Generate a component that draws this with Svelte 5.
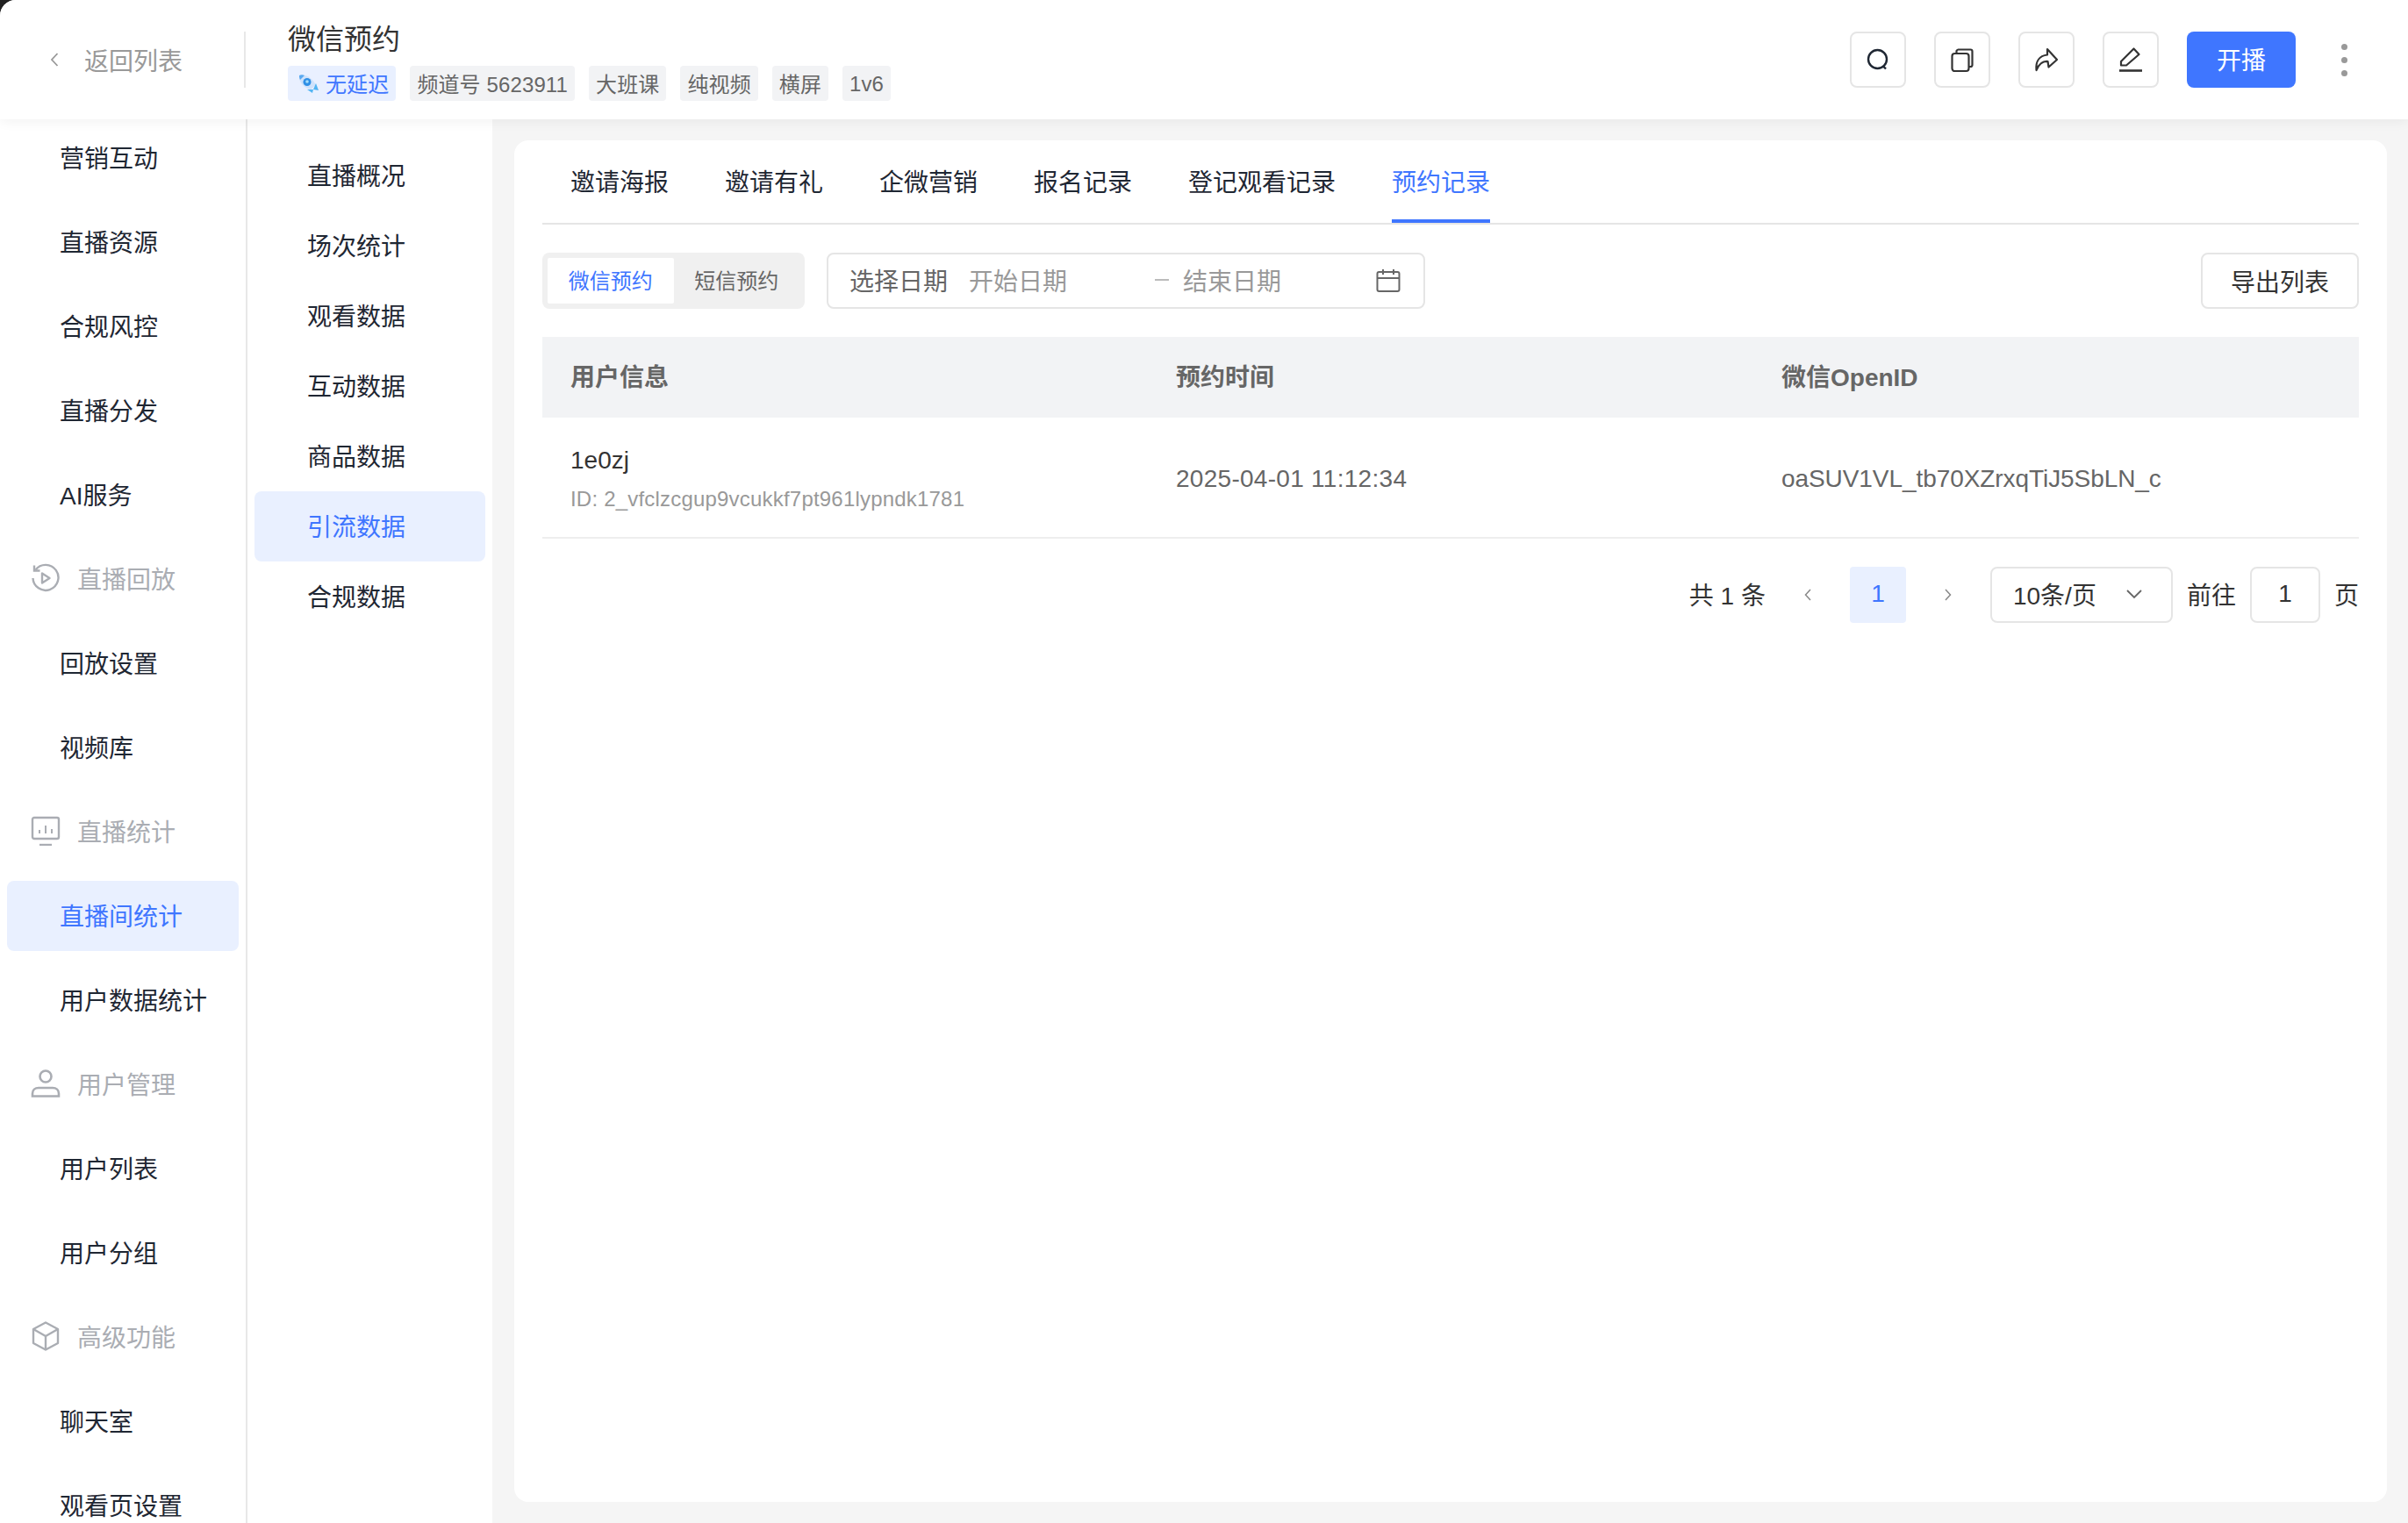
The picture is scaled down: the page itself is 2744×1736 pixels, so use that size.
<script lang="ts">
	const nav = [
		{ label: '营销互动' },
		{ label: '直播资源' },
		{ label: '合规风控' },
		{ label: '直播分发' },
		{ label: 'AI服务' },
		{ label: '直播回放', icon: 'replay' },
		{ label: '回放设置' },
		{ label: '视频库' },
		{ label: '直播统计', icon: 'stats' },
		{ label: '直播间统计', active: true },
		{ label: '用户数据统计' },
		{ label: '用户管理', icon: 'user' },
		{ label: '用户列表' },
		{ label: '用户分组' },
		{ label: '高级功能', icon: 'box' },
		{ label: '聊天室' },
		{ label: '观看页设置' }
	];

	const subnav = ['直播概况', '场次统计', '观看数据', '互动数据', '商品数据', '引流数据', '合规数据'];
	const tags = ['频道号 5623911', '大班课', '纯视频', '横屏', '1v6'];
	const tabs = ['邀请海报', '邀请有礼', '企微营销', '报名记录', '登记观看记录', '预约记录'];
</script>

<div class="page">
	<header class="topbar">
		<div class="back">
			<svg class="back-icon" width="12" height="20" viewBox="0 0 12 20" fill="none">
				<path d="M9.5 3 3 10l6.5 7" stroke="#999" stroke-width="1.8" />
			</svg>
			<span>返回列表</span>
		</div>
		<div class="title-block">
			<div class="title">微信预约</div>
			<div class="tags">
				<span class="tag tag-blue">
					<svg width="30" height="24" viewBox="0 0 30 24" fill="none">
						<path d="M5 3C12 1 20 6 24 14l-6 5C10 17 4 10 5 3Z" fill="#cfe2fb" />
						<path d="M5 3c2-1 4-1 6 0L6 8C5 6 5 4 5 3Z" fill="#5aa9f0" />
						<circle cx="14" cy="10.500" r="4.500" fill="#2f8fe6" />
						<circle cx="14" cy="10" r="1.800" fill="#a8def9" />
						<path d="M24 12l3 8-6-1zM14 19l6 4 1-4z" fill="#53b5f3" />
					</svg>
					无延迟
				</span>
				{#each tags as tag}
					<span class="tag">{tag}</span>
				{/each}
			</div>
		</div>
		<div class="actions">
			<button class="icon-btn" aria-label="查看">
				<svg width="30" height="30" viewBox="0 0 30 30" fill="none" stroke="#1f2733" stroke-width="2.400">
					<circle cx="14.500" cy="14.500" r="10.500" />
					<path d="M21 22.500l3 3" />
				</svg>
			</button>
			<button class="icon-btn" aria-label="复制">
				<svg width="30" height="30" viewBox="0 0 30 30" fill="none" stroke="#333" stroke-width="2.200">
					<rect x="3.500" y="8" width="19" height="20" rx="3" />
					<path d="M8.500 7.500V5a3 3 0 0 1 2-1.500h14a2 2 0 0 1 2 2V21a2 2 0 0 1-2 2h-1.500" />
				</svg>
			</button>
			<button class="icon-btn" aria-label="分享">
				<svg width="30" height="30" viewBox="0 0 30 30" fill="none" stroke="#333" stroke-width="2.200" stroke-linejoin="round">
					<path d="M3.500 27C2.500 17 7 10.500 16 9.500V3l11 12-9.500 8.500-1-6.500C10 16.500 6 21 3.500 27Z" />
				</svg>
			</button>
			<button class="icon-btn" aria-label="编辑">
				<svg width="30" height="30" viewBox="0 0 30 30" fill="none" stroke="#333" stroke-width="2.200">
					<path d="M4 21.500V17L18.500 2.500 24.500 9 10 21.500Z" stroke-linejoin="round" />
					<path d="M2 27.500h26" stroke-width="2.600" />
				</svg>
			</button>
			<button class="start">开播</button>
			<div class="more"><i></i><i></i><i></i></div>
		</div>
	</header>

	<div class="body">
		<aside class="nav">
			<ul>
				{#each nav as item}
					<li class:group={item.icon} class:active={item.active}>
						{#if item.icon === 'replay'}
							<svg width="34" height="34" viewBox="0 0 34 34" fill="none" stroke="#aaadb3" stroke-width="2.400">
								<path d="M5.500 7.500A14.500 14.500 0 1 1 2.500 17" />
								<path d="M4 2.500v6h6.500" />
								<path d="M13 11.500v11l8.500-5.500Z" stroke-linejoin="round" />
							</svg>
						{:else if item.icon === 'stats'}
							<svg width="34" height="34" viewBox="0 0 34 34" fill="none" stroke="#aaadb3" stroke-width="2.400">
								<rect x="2" y="2" width="30" height="24" rx="2" />
								<path d="M10 33h14" />
								<path d="M10 16v4M17 11v9M24 15v5" stroke-width="2" />
							</svg>
						{:else if item.icon === 'user'}
							<svg width="34" height="34" viewBox="0 0 34 34" fill="none" stroke="#aaadb3" stroke-width="2.600">
								<circle cx="17" cy="9" r="6.500" />
								<path d="M2 31.500v-3c0-4 3-6.500 7-6.500h16c4 0 7 2.500 7 6.500v3Z" />
							</svg>
						{:else if item.icon === 'box'}
							<svg width="34" height="34" viewBox="0 0 34 34" fill="none" stroke="#aaadb3" stroke-width="2.400" stroke-linejoin="round">
								<path d="M17 1.500 31 9v16l-14 7.500L3 25V9Z" />
								<path d="M3 9l14 8 14-8M17 17v15.500" />
							</svg>
						{/if}
						<span>{item.label}</span>
					</li>
				{/each}
			</ul>
		</aside>

		<aside class="subnav">
			{#each subnav as item}
				<div class="subnav-item" class:active={item === '引流数据'}>{item}</div>
			{/each}
		</aside>

		<main class="main">
			<section class="card">
				<nav class="tabs">
					{#each tabs as tab}
						<div class="tab" class:active={tab === '预约记录'}>{tab}</div>
					{/each}
				</nav>

				<div class="toolbar">
					<div class="segment">
						<span class="seg on">微信预约</span>
						<span class="seg">短信预约</span>
					</div>
					<div class="range">
						<span class="range-label">选择日期</span>
						<span class="range-start">开始日期</span>
						<span class="range-dash"></span>
						<span class="range-end">结束日期</span>
						<svg width="28" height="28" viewBox="0 0 28 28" fill="none" stroke="#666" stroke-width="2">
							<rect x="1.500" y="4" width="25" height="22" rx="2" />
							<path d="M1.500 11h25M8 1v6M20 1v6" />
						</svg>
					</div>
					<button class="export">导出列表</button>
				</div>

				<div class="table">
					<div class="row head">
						<div>用户信息</div>
						<div>预约时间</div>
						<div>微信OpenID</div>
					</div>
					<div class="row">
						<div>
							<div class="user-name">1e0zj</div>
							<div class="user-id">ID: 2_vfclzcgup9vcukkf7pt961lypndk1781</div>
						</div>
						<div class="cell-time">2025-04-01 11:12:34</div>
						<div class="cell-openid">oaSUV1VL_tb70XZrxqTiJ5SbLN_c</div>
					</div>
				</div>

				<div class="pager">
					<span class="total">共 1 条</span>
					<svg class="arrow prev" width="10" height="16" viewBox="0 0 10 16" fill="none" stroke="#888" stroke-width="1.500">
						<path d="M8 2 2.500 8 8 14" />
					</svg>
					<span class="page-num">1</span>
					<svg class="arrow next" width="10" height="16" viewBox="0 0 10 16" fill="none" stroke="#888" stroke-width="1.500">
						<path d="M2 2l5.500 6L2 14" />
					</svg>
					<div class="size">
						<span>10条/页</span>
						<svg width="20" height="12" viewBox="0 0 20 12" fill="none" stroke="#666" stroke-width="1.800">
							<path d="M2 2l8 8 8-8" />
						</svg>
					</div>
					<span class="goto">前往</span>
					<span class="goto-input">1</span>
					<span class="goto-unit">页</span>
				</div>
			</section>
		</main>
	</div>
</div>

<style>
	:global(body) {
		background: #222;
	}

	.page {
		width: 2744px;
		height: 1736px;
		background: #fff;
		border-top-left-radius: 18px;
		overflow: hidden;
		display: flex;
		flex-direction: column;
		font-family: 'Liberation Sans', 'Noto Sans CJK SC', sans-serif;
		font-size: 28px;
		color: #333;
	}

	.topbar {
		height: 136px;
		flex: none;
		display: flex;
		align-items: center;
		background: #fff;
		box-shadow: 0 2px 14px rgba(0, 0, 0, 0.06);
		position: relative;
		z-index: 2;
	}

	.back {
		width: 280px;
		height: 64px;
		flex: none;
		display: flex;
		align-items: center;
		gap: 28px;
		padding-left: 56px;
		padding-bottom: 1px;
		box-sizing: border-box;
		border-right: 2px solid #e8e8e8;
		color: #999;
	}

	.title-block {
		margin-left: 48px;
	}

	.title {
		font-size: 32px;
		line-height: 44px;
		margin-top: 1px;
		color: #333;
	}

	.tags {
		display: flex;
		gap: 16px;
		margin-top: 8px;
	}

	.tag {
		height: 40px;
		box-sizing: border-box;
		padding: 0 8px;
		display: flex;
		align-items: center;
		gap: 5px;
		border-radius: 4px;
		background: #f2f3f5;
		font-size: 24px;
		letter-spacing: 0.12px;
		color: #666;
	}

	.tag:last-child {
		padding-top: 2px;
	}

	.tag-blue {
		background: #e9f0ff;
		color: #3f76ff;
	}

	.actions {
		margin-left: auto;
		display: flex;
		align-items: center;
		gap: 32px;
		padding-right: 68px;
	}

	.icon-btn {
		width: 64px;
		height: 64px;
		padding: 0;
		display: flex;
		align-items: center;
		justify-content: center;
		background: #fff;
		border: 2px solid #e5e5e5;
		border-radius: 8px;
	}

	.start {
		width: 124px;
		height: 64px;
		padding: 0 0 2px;
		border: 0;
		border-radius: 8px;
		background: #3f76ff;
		color: #fff;
		font: inherit;
	}

	.more {
		width: 8px;
		margin-left: 20px;
		display: flex;
		flex-direction: column;
		gap: 8px;
	}

	.more i {
		width: 7px;
		height: 7px;
		border-radius: 50%;
		background: #999;
	}

	.body {
		flex: 1;
		min-height: 0;
		display: flex;
	}

	.nav {
		width: 282px;
		flex: none;
		overflow: hidden;
		border-right: 2px solid #e8e8e8;
		box-sizing: border-box;
		background: #fff;
	}

	.nav ul {
		list-style: none;
		margin: -4px 0 0;
		padding: 0;
	}

	.nav li {
		height: 96px;
		box-sizing: border-box;
		display: flex;
		align-items: center;
		padding-left: 68px;
		padding-bottom: 3px;
		color: #1f2733;
	}

	.nav li.group {
		padding-left: 35px;
		gap: 19px;
		color: #aaadb3;
	}

	.nav li.active {
		height: 80px;
		margin: 8px 8px;
		padding-left: 60px;
		border-radius: 8px;
		background: #e9f0ff;
		color: #3f76ff;
	}

	.subnav {
		width: 279px;
		flex: none;
		box-sizing: border-box;
		padding: 24px 8px 0;
		background: #fff;
	}

	.subnav-item {
		height: 80px;
		box-sizing: border-box;
		display: flex;
		align-items: center;
		padding-left: 60px;
		padding-bottom: 3px;
		border-radius: 8px;
		color: #1f2733;
	}

	.subnav-item.active {
		background: #e9f0ff;
		color: #3f76ff;
	}

	.main {
		flex: 1;
		min-width: 0;
		background: #f5f5f5;
		padding: 24px 24px 24px 25px;
		box-sizing: border-box;
	}

	.card {
		height: 100%;
		box-sizing: border-box;
		background: #fff;
		border-radius: 16px;
		padding: 0 32px;
	}

	.tabs {
		height: 96px;
		box-sizing: border-box;
		display: flex;
		gap: 64px;
		padding-left: 32px;
		border-bottom: 2px solid #e5e5e5;
	}

	.tab {
		height: 94px;
		box-sizing: border-box;
		padding-top: 29px;
		line-height: 40px;
		color: #1f2733;
	}

	.tab.active {
		color: #3f76ff;
		border-bottom: 4px solid #3f76ff;
	}

	.toolbar {
		margin-top: 32px;
		display: flex;
		align-items: center;
	}

	.segment {
		display: flex;
		width: 299px;
		height: 64px;
		box-sizing: border-box;
		padding: 6px;
		background: #f0f0f0;
		border-radius: 8px;
		font-size: 24px;
	}

	.seg {
		width: 144px;
		box-sizing: border-box;
		padding-bottom: 3px;
		display: flex;
		align-items: center;
		justify-content: center;
		color: #666;
	}

	.seg.on {
		background: #fff;
		border-radius: 2px;
		color: #3f76ff;
	}

	.range {
		width: 682px;
		height: 64px;
		box-sizing: border-box;
		margin-left: 25px;
		padding: 0 26px 3px 24px;
		display: flex;
		align-items: center;
		border: 2px solid #e5e5e5;
		border-radius: 8px;
		color: #999;
	}

	.range-label {
		color: #666;
	}

	.range-start {
		margin-left: 24px;
	}

	.range-dash {
		width: 16px;
		height: 2px;
		margin-left: 100px;
		background: #bbb;
	}

	.range-end {
		margin-left: 16px;
	}

	.range svg {
		margin-left: auto;
		margin-top: 3px;
	}

	.export {
		width: 180px;
		height: 64px;
		margin-left: auto;
		background: #fff;
		border: 2px solid #e5e5e5;
		border-radius: 8px;
		font: inherit;
		color: #333;
	}

	.table {
		margin-top: 32px;
	}

	.row {
		display: grid;
		grid-template-columns: repeat(3, 690px);
		align-items: center;
		height: 138px;
		box-sizing: border-box;
		border-bottom: 2px solid #eee;
		color: #666;
	}

	.row > div {
		padding-left: 32px;
	}

	.row.head {
		height: 92px;
		background: #f2f3f5;
		border-bottom: 0;
		font-weight: 700;
		color: #666;
	}

	.row.head > div {
		padding-bottom: 4px;
	}

	.row > .cell-time,
	.row > .cell-openid {
		padding-top: 4px;
	}

	.cell-time {
		letter-spacing: 0.28px;
	}

	.cell-openid {
		letter-spacing: -0.07px;
	}

	.user-name {
		padding-top: 2px;
		line-height: 40px;
		color: #333;
	}

	.user-id {
		margin-top: 8px;
		line-height: 32px;
		font-size: 24px;
		letter-spacing: 0.2px;
		color: #999;
	}

	.pager {
		margin-top: 32px;
		display: flex;
		align-items: center;
		justify-content: flex-end;
		height: 64px;
		color: #333;
	}

	.total,
	.goto,
	.goto-unit {
		padding-bottom: 3px;
	}

	.arrow.prev {
		margin: 0 43px;
	}

	.arrow.next {
		margin: 0 43px;
	}

	.page-num {
		width: 64px;
		height: 64px;
		box-sizing: border-box;
		padding-bottom: 3px;
		display: flex;
		align-items: center;
		justify-content: center;
		background: #e9f0ff;
		border-radius: 4px;
		color: #3f76ff;
	}

	.size {
		width: 208px;
		height: 64px;
		box-sizing: border-box;
		padding: 0 32px 2px 24px;
		display: flex;
		align-items: center;
		justify-content: space-between;
		border: 2px solid #e5e5e5;
		border-radius: 8px;
	}

	.goto {
		margin-left: 16px;
	}

	.goto-input {
		width: 80px;
		height: 64px;
		box-sizing: border-box;
		margin-left: 16px;
		padding-bottom: 2px;
		display: flex;
		align-items: center;
		justify-content: center;
		border: 2px solid #e5e5e5;
		border-radius: 8px;
	}

	.goto-unit {
		margin-left: 16px;
	}
</style>
